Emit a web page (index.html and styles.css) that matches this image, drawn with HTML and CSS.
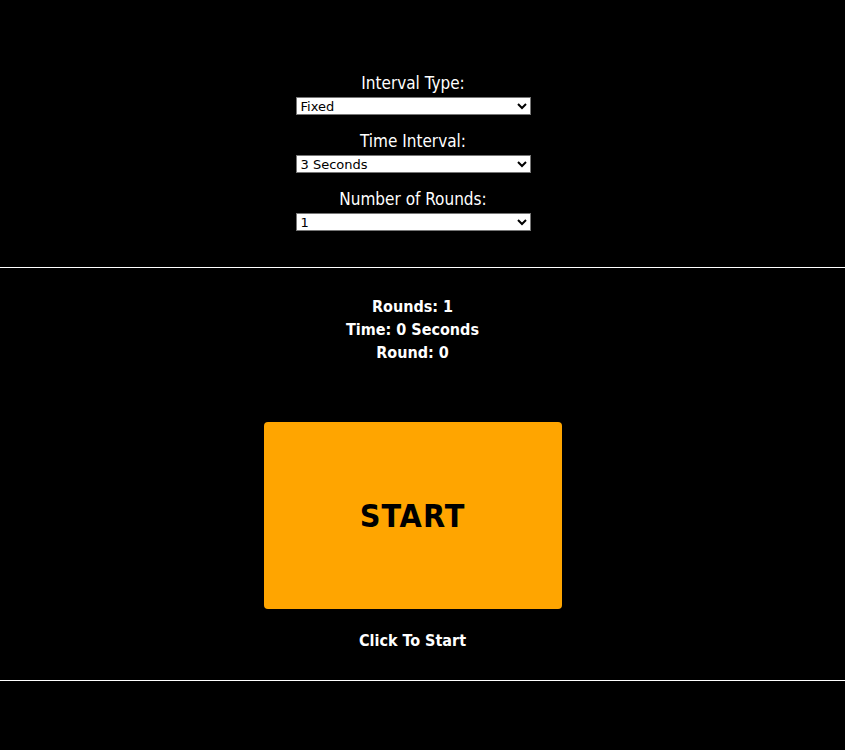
FILE: index.html
```html
<!DOCTYPE html>
<html>
<head>
<meta charset="utf-8">
<link rel="stylesheet" href="styles.css">
</head>
<body>
<div class="settings">
  <div class="field">
    <label class="label" for="type">Interval Type:</label>
    <select id="type" class="select"><option>Fixed</option></select>
  </div>
  <div class="field">
    <label class="label" for="time">Time Interval:</label>
    <select id="time" class="select"><option>3 Seconds</option></select>
  </div>
  <div class="field">
    <label class="label" for="rounds">Number of Rounds:</label>
    <select id="rounds" class="select"><option>1</option></select>
  </div>
</div>
<hr class="rule">
<div class="stats">
  <div>Rounds: 1</div>
  <div>Time: 0 Seconds</div>
  <div>Round: 0</div>
</div>
<div class="action">
  <button class="start">START</button>
  <div class="hint">Click To Start</div>
</div>
<hr class="rule">
</body>
</html>
```
FILE: styles.css
```css
html, body {
  margin: 0;
  padding: 0;
  background: #000;
  color: #fff;
  font-family: "DejaVu Sans Condensed", "DejaVu Sans", sans-serif;
}
.settings {
  display: flex;
  flex-direction: column;
  align-items: center;
  padding-top: 73px;
  padding-right: 19px;
  gap: 16px;
  padding-bottom: 36px;
}
.field {
  display: flex;
  flex-direction: column;
  align-items: center;
  gap: 4px;
}
.label {
  font-size: 17px;
  line-height: 20px;
}
.select {
  box-sizing: border-box;
  width: 235px;
  height: 18px;
  font-size: 13px;
  font-family: "DejaVu Sans", sans-serif;
  background: #fff;
  color: #000;
  border: 1px solid #767676;
  border-radius: 0;
  padding: 0;
}
.rule {
  margin: 0;
  border: 0;
  border-top: 1px solid #fff;
}
.stats {
  display: flex;
  flex-direction: column;
  align-items: center;
  font-weight: bold;
  font-size: 16px;
  line-height: 23px;
  padding-top: 27px;
  padding-right: 20px;
}
.action {
  display: flex;
  flex-direction: column;
  align-items: center;
  padding-top: 58px;
  padding-right: 20px;
  padding-bottom: 29px;
}
.start {
  width: 298px;
  height: 187px;
  background: #ffa500;
  border: none;
  border-radius: 4px;
  font-family: "DejaVu Sans Condensed", "DejaVu Sans", sans-serif;
  font-size: 32px;
  font-weight: bold;
  color: #000;
  letter-spacing: 1px;
  padding: 0;
}
.hint {
  margin-top: 22px;
  font-weight: bold;
  font-size: 16px;
  line-height: 20px;
}
```
